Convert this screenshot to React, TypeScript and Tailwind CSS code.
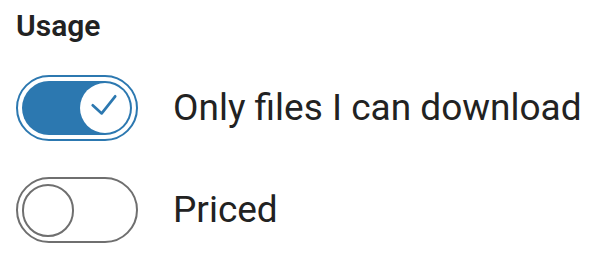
type ToggleProps = {
  checked: boolean
  label: string
}

function Toggle({ checked, label }: ToggleProps) {
  return (
    <label className="flex items-center gap-[35px]">
      <span
        className={
          checked
            ? 'flex h-[66px] w-[122px] shrink-0 rounded-full border-2 border-[#2c78b0] p-[4px]'
            : 'flex h-[66px] w-[122px] shrink-0 rounded-full border-2 border-[#6f6f6f] p-[4px]'
        }
      >
        {checked ? (
          <span className="flex flex-1 items-center justify-end rounded-full bg-[#2c78b0] p-[2px]">
            <span className="flex h-[50px] w-[50px] items-center justify-center rounded-full bg-white">
              <svg width="30" height="30" viewBox="0 0 30 30" fill="none">
                <path
                  d="M3 17 L13 26 L28 7"
                  stroke="#2c78b0"
                  strokeWidth="3"
                  strokeLinecap="round"
                  strokeLinejoin="round"
                  transform="translate(0 -3) scale(0.9)"
                />
              </svg>
            </span>
          </span>
        ) : (
          <span className="flex flex-1 items-center rounded-full bg-white">
            <span className="h-[53px] w-[52px] rounded-full border-2 border-[#6f6f6f] bg-white" />
          </span>
        )}
      </span>
      <span className="text-[37px] leading-[44px] text-[#222]">{label}</span>
    </label>
  )
}

export default function App() {
  return (
    <div
      className="min-h-screen bg-white pl-4 pt-[8px]"
      style={{ fontFamily: 'Roboto, "Liberation Sans", sans-serif' }}
    >
      <h2 className="text-[30px] font-semibold leading-[36px] text-[#222]">Usage</h2>
      <div className="mt-[31px] flex flex-col gap-[36px]">
        <Toggle checked label="Only files I can download" />
        <Toggle checked={false} label="Priced" />
      </div>
    </div>
  )
}
